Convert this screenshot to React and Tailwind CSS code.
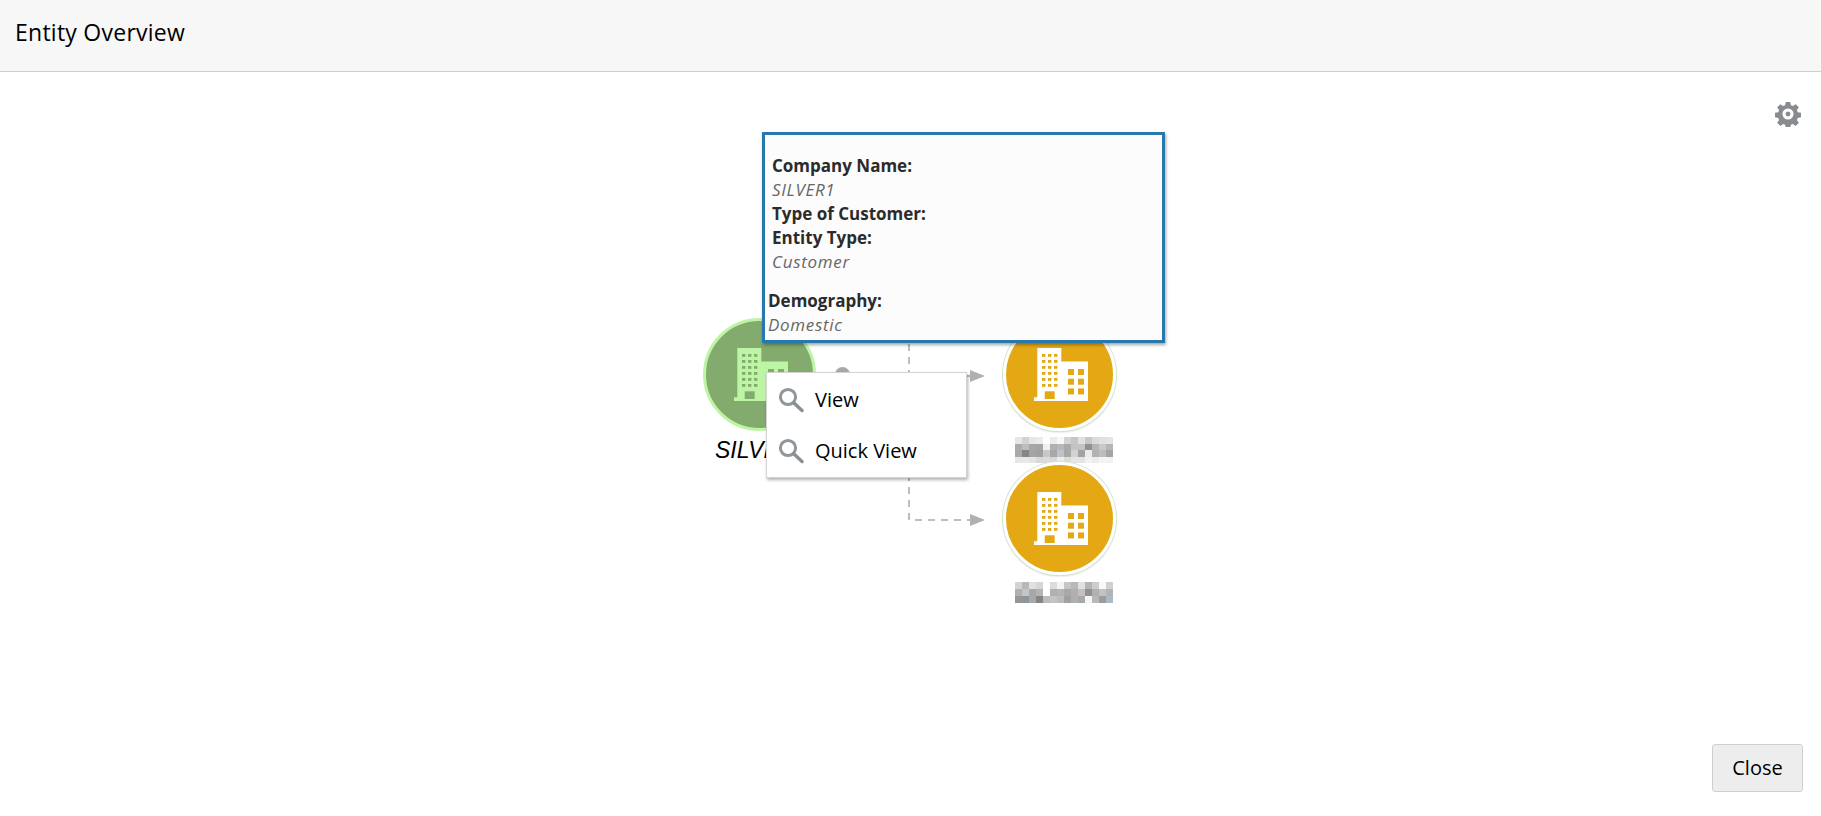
// same block of office buildings on every node, numbers measured in px from the reference
function BuildingIcon({ color, holeColor, className }) {
  const towerWindows = [];
  for (let r = 0; r < 6; r++) {
    for (let c = 0; c < 3; c++) {
      towerWindows.push(<rect key={r + '-' + c} x={8 + c * 6} y={6 + r * 6} width="3.4" height="2.8" fill={holeColor} />);
    }
  }
  const sideWindows = [];
  for (let r = 0; r < 3; r++) {
    for (let c = 0; c < 2; c++) {
      sideWindows.push(<rect key={r + '-' + c} x={34 + c * 10} y={21 + r * 9.7} width="6" height="6" fill={holeColor} />);
    }
  }
  return (
    <svg viewBox="0 0 54 53" className={className}>
      <path fill={color} d="M3.3 0h24v13.5H54V53H0v-3.7h3.3z" />
      {towerWindows}
      {sideWindows}
      <rect x="10.7" y="43.3" width="10" height="7.7" fill={holeColor} />
    </svg>
  );
}

// the names under the nodes are pixelated in the picture, values are the gray of each cell
const mosaicA = [
  ['#e6e6e6', '#d2d2d2', '#e6e6e6', '#ececec', '#ffffff', '#ececec', '#f8f8f4', '#d4d4d4', '#c6c6c6', '#e0e0e0', '#c8c8c8', '#dadada', '#e0e0e0', '#e4e4e4'],
  ['#ababab', '#bdbdbd', '#a6a6a6', '#a4a4a4', '#f0f0f0', '#b0b0b0', '#b8b8b8', '#aaaaaa', '#c4c4c4', '#c9c2ba', '#8d9299', '#b5b5b5', '#c8c8c8', '#b5b5b5'],
  ['#a9a9a9', '#868686', '#a4a4a4', '#a0a0a0', '#c8c8c8', '#a8a8a8', '#c0c4c8', '#a8a8a8', '#d2d2d2', '#a4a4a4', '#ececec', '#b2b2b2', '#bcbcbc', '#a4a4a4'],
  ['#e6e6e6', '#e8e8e8', '#e4e4e4', '#d8d8d8', '#dcdcdc', '#d8d8d8', '#ececec', '#dcdcdc', '#e4e4e4', '#e4e4e4', '#f2f2f2', '#ececec', '#f4f4f4', '#f2f2f2'],
];
const mosaicB = [
  ['#d4d4d4', '#b8b8b8', '#e0e0e0', '#d6d6d6', '#ffffff', '#dcdcdc', '#f4f4f0', '#c6c6c6', '#b8b8b8', '#e0e0e0', '#b4b4b4', '#cccccc', '#f8f8f8', '#d0d0d0'],
  ['#b0b0b0', '#c4c4c4', '#a8a8a8', '#b4b4b4', '#ffffff', '#b0b0b0', '#b4b4b4', '#a8a8a8', '#b0b0b0', '#c8c0b8', '#8d9299', '#b0b0b0', '#c2c2c2', '#b4b4b4'],
  ['#969696', '#8c949c', '#a8a8a8', '#858585', '#bcbcbc', '#c4c4c4', '#bcbcbc', '#a0a0a0', '#b0b0b0', '#a8a8a8', '#f6f6f6', '#b8b8b8', '#9c9c98', '#aab8c8'],
];

function Mosaic({ rows, className }) {
  return (
    <svg viewBox={`0 0 14 ${rows.length}`} preserveAspectRatio="none" shapeRendering="crispEdges" className={className}>
      {rows.map((row, y) => row.map((fill, x) => <rect key={y + '-' + x} x={x} y={y} width="1" height="1" fill={fill} />))}
    </svg>
  );
}

function Connectors() {
  return (
    <svg className="absolute left-[210px] top-[203px] w-[120px] h-[210px]" viewBox="0 0 120 210">
      <path d="M29 14V190H90" fill="none" stroke="#bdbdbd" strokeWidth="2" strokeDasharray="7 6" />
      <path d="M20 46H90" fill="none" stroke="#bdbdbd" strokeWidth="2" strokeDasharray="7 6" />
      <path d="M90 40l15 6-15 6z" fill="#b0b0b0" />
      <path d="M90 184l15 6-15 6z" fill="#b0b0b0" />
    </svg>
  );
}

function CompanyNode({ className }) {
  return (
    <div className={`absolute w-[113px] h-[113px] rounded-full bg-[#e3a813] border-[3px] border-white shadow-[0_0_0_1px_#d5e6cf,0_1px_2px_rgba(0,0,0,0.25)] flex items-center justify-center ${className}`}>
      <BuildingIcon color="#ffffff" holeColor="#e3a813" className="w-[54px] h-[53px] ml-[2px]" />
    </div>
  );
}

function SearchIcon({ className }) {
  return (
    <svg viewBox="0 0 26 26" className={className}>
      <circle cx="10" cy="10" r="7.6" fill="#ffffff" stroke="#8f979c" strokeWidth="3" />
      <path d="M16 16l8 7.5" stroke="#8a8f92" strokeWidth="3.4" strokeLinecap="round" />
    </svg>
  );
}

function MenuItem({ label }) {
  return (
    <div className="h-[52px] flex items-center pl-[11px] gap-[11px]">
      <SearchIcon className="w-[26px] h-[26px]" />
      <span className="text-[20px] text-black">{label}</span>
    </div>
  );
}

function InfoField({ label, value }) {
  return (
    <>
      <div className="font-bold text-[#2b2b2b]">{label}</div>
      {value && <div className="italic text-[#666666] tracking-[0.7px]">{value}</div>}
    </>
  );
}

export default function App() {
  return (
    <div className="h-screen w-full flex flex-col bg-white overflow-hidden font-['Open_Sans',sans-serif]">
      <div className="h-[72px] shrink-0 bg-[#f7f7f7] border-b border-[#cfcfcf] flex items-center pl-[15px] pb-[7px]">
        <h1 className="text-[23px] tracking-[0.25px] text-black">Entity Overview</h1>
      </div>

      <div className="flex-1 flex flex-col">
        <div className="flex justify-end pt-[29px] pr-[20px]">
          <svg viewBox="0 0 28 28" className="w-[26px] h-[26px]">
            <path
              fill="#888c90"
              fillRule="evenodd"
              d="M11.6 1h4.8l.7 3.6 2.2.9 3-2.1 3.4 3.4-2.1 3 .9 2.2 3.6.7v4.8l-3.6.7-.9 2.2 2.1 3-3.4 3.4-3-2.1-2.2.9-.7 3.6h-4.8l-.7-3.6-2.2-.9-3 2.1-3.4-3.4 2.1-3-.9-2.2-3.6-.7v-4.8l3.6-.7.9-2.2-2.1-3 3.4-3.4 3 2.1 2.2-.9zM14 8a6 6 0 100 12 6 6 0 000-12z"
            />
            <circle cx="14" cy="14" r="2.6" fill="#888c90" />
          </svg>
        </div>

        {/* free canvas of the diagram, nodes are placed inside it */}
        <div className="relative flex-1 w-[481px] mx-auto">
          <Connectors />

          <div className="absolute left-[165px] top-[240px] w-[15px] h-[15px] rounded-full bg-[#a8a8a8]" />

          <div className="absolute left-[33px] top-[191px] w-[113px] h-[113px] rounded-full bg-[#83ab6e] border-[3px] border-[#bdf5a5] flex items-center justify-center">
            <BuildingIcon color="#bdf5a5" holeColor="#83ab6e" className="w-[54px] h-[53px] ml-[2px]" />
          </div>
          <div className="absolute left-[45px] top-[309px] text-[23px] leading-[28px] italic text-black font-['Liberation_Sans',sans-serif]">SILVER1</div>

          <CompanyNode className="left-[333px] top-[191px]" />
          <Mosaic rows={mosaicA} className="absolute left-[345px] top-[310px] w-[98px] h-[26px]" />

          <CompanyNode className="left-[333px] top-[335px]" />
          <Mosaic rows={mosaicB} className="absolute left-[345px] top-[455px] w-[98px] h-[21px]" />

          <div className="absolute left-[96px] top-[245px] w-[201px] h-[106px] pt-[1px] bg-white border border-[#d4d4d4] shadow-[1px_2px_3px_rgba(0,0,0,0.3)] flex flex-col">
            <MenuItem label="View" />
            <MenuItem label="Quick View" />
          </div>

          <div className="absolute left-[92px] top-[5px] w-[403px] h-[211px] bg-[#fcfcfc] border-[3px] border-[#2878b0] shadow-[1px_2px_3px_rgba(0,0,0,0.35)] pt-[19px] text-[17px] leading-[24px]">
            <div className="pl-[7px]">
              <InfoField label="Company Name:" value="SILVER1" />
              <InfoField label="Type of Customer:" />
              <InfoField label="Entity Type:" value="Customer" />
            </div>
            <div className="pl-[3px] mt-[15px]">
              <InfoField label="Demography:" value="Domestic" />
            </div>
          </div>
        </div>

        <div className="flex justify-end pr-[18px] pb-[24px]">
          <button className="w-[91px] h-[48px] bg-[#ededed] border border-[#cfcfcf] rounded-[3px] text-[20px] text-black">
            Close
          </button>
        </div>
      </div>
    </div>
  );
}
